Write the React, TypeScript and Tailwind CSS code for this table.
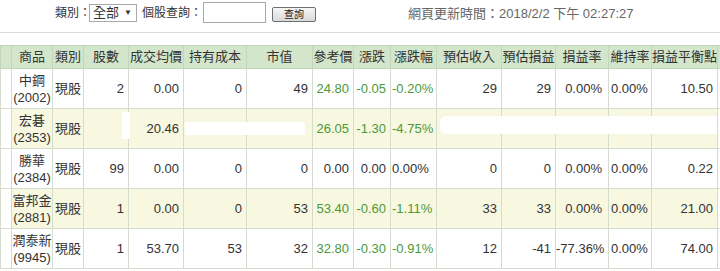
type Row = {
  name: string;
  code: string;
  kind: string;
  qty: string;
  avg: string;
  cost: string;
  value: string;
  ref: string;
  chg: string;
  pct: string;
  income: string;
  pnl: string;
  rate: string;
  keep: string;
  breakeven: string;
  green: boolean;
};

const rows: Row[] = [
  { name: "中鋼", code: "(2002)", kind: "現股", qty: "2", avg: "0.00", cost: "0", value: "49", ref: "24.80", chg: "-0.05", pct: "-0.20%", income: "29", pnl: "29", rate: "0.00%", keep: "0.00%", breakeven: "10.50", green: true },
  { name: "宏碁", code: "(2353)", kind: "現股", qty: "", avg: "20.46", cost: "", value: "", ref: "26.05", chg: "-1.30", pct: "-4.75%", income: "", pnl: "", rate: "", keep: "", breakeven: "", green: true },
  { name: "勝華", code: "(2384)", kind: "現股", qty: "99", avg: "0.00", cost: "0", value: "0", ref: "0.00", chg: "0.00", pct: "0.00%", income: "0", pnl: "0", rate: "0.00%", keep: "0.00%", breakeven: "0.22", green: false },
  { name: "富邦金", code: "(2881)", kind: "現股", qty: "1", avg: "0.00", cost: "0", value: "53", ref: "53.40", chg: "-0.60", pct: "-1.11%", income: "33", pnl: "33", rate: "0.00%", keep: "0.00%", breakeven: "21.00", green: true },
  { name: "潤泰新", code: "(9945)", kind: "現股", qty: "1", avg: "53.70", cost: "53", value: "32", ref: "32.80", chg: "-0.30", pct: "-0.91%", income: "12", pnl: "-41", rate: "-77.36%", keep: "0.00%", breakeven: "74.00", green: true },
];

const headers = ["商品", "類別", "股數", "成交均價", "持有成本", "市值", "參考價", "漲跌", "漲跌幅", "預估收入", "預估損益", "損益率", "維持率", "損益平衡點"];
const widths = [11, 41, 31, 45, 55, 63, 66, 41, 37, 46, 65, 54, 53, 43, 66, 20];

export default function App() {
  const font = { fontFamily: '"Liberation Sans", "Noto Sans CJK TC", sans-serif' };

  return (
    <div className="w-[720px] h-[271px] bg-white overflow-hidden text-[13px] text-[#333]" style={font}>
      {/* Query bar */}
      <div className="h-[33px] border-b border-[#dcdcdc] flex items-start">
        <div className="h-[25px] flex items-center pl-[55px] w-full">
          <span className="text-[12px]">類別：</span>
          <div className="ml-[-2px] h-[18px] w-[48px] border border-[#a8a8a8] flex items-center px-[3px] gap-[5px]">
            <span>全部</span>
            <span className="text-[8px]">▼</span>
          </div>
          <span className="ml-[5px] text-[12px]">個股查詢：</span>
          <div className="ml-[1px] h-[21px] w-[63px] border border-[#a9a9a9] bg-white"></div>
          <button className="ml-[6px] mt-[4px] h-[15px] w-[44px] border border-[#6f6f6f] rounded-[2px] bg-gradient-to-b from-[#f6f6f6] to-[#d9d9d9] text-[10px] leading-none text-[#222]">
            查詢
          </button>
          <span className="ml-[92px] mt-[3px] text-[#666]">網頁更新時間：2018/2/2 下午 02:27:27</span>
        </div>
      </div>

      {/* Holdings table */}
      <div className="relative mt-[12px] w-[720px] overflow-hidden">
        <table className="table-fixed border-collapse w-[737px]">
          <colgroup>
            {widths.map((w, i) => (
              <col key={i} style={{ width: w }} />
            ))}
          </colgroup>
          <thead>
            <tr className="h-[23px] bg-[#d3e6cc]">
              <th className="border border-[#c3d6bc]"></th>
              {headers.map((h) => (
                <th key={h} className="border border-[#c3d6bc] font-normal text-center p-0 whitespace-nowrap leading-[22px]">
                  {h}
                </th>
              ))}
              <th className="border border-[#c3d6bc]"></th>
            </tr>
          </thead>
          <tbody>
            {rows.map((r, i) => {
              const bg = i % 2 === 1 ? "bg-[#f8f7e0]" : "bg-white";
              const cell = `border border-[#d3dccd] ${bg} text-right pr-[4px] whitespace-nowrap`;
              const gcell = `${cell} ${r.green ? "text-[#4a9a3a]" : ""}`;
              return (
                <tr key={r.code} className="h-[40px]">
                  <td className="border border-[#d3dccd] bg-white"></td>
                  <td className={`border border-[#d3dccd] ${bg} text-center leading-[17px] p-0`}>
                    <div>{r.name}</div>
                    <div>{r.code}</div>
                  </td>
                  <td className={`border border-[#d3dccd] ${bg} text-left pl-[2px] whitespace-nowrap`}>{r.kind}</td>
                  <td className={cell}>{r.qty}</td>
                  <td className={cell}>{r.avg}</td>
                  <td className={cell}>{r.cost}</td>
                  <td className={cell}>{r.value}</td>
                  <td className={gcell}>{r.ref}</td>
                  <td className={`${gcell} pr-[1px]`}>{r.chg}</td>
                  <td className={`${gcell.replace("text-right", "text-left")} pl-[1px]`}>{r.pct}</td>
                  <td className={cell}>{r.income}</td>
                  <td className={cell}>{r.pnl}</td>
                  <td className={`${cell} pr-[6px]`}>{r.rate}</td>
                  <td className={`border border-[#d3dccd] ${bg} text-left pl-[2px] whitespace-nowrap`}>{r.keep}</td>
                  <td className={cell}>{r.breakeven}</td>
                  <td className="border border-[#d3dccd] bg-white"></td>
                </tr>
              );
            })}
          </tbody>
        </table>

        {/* redaction patches over the 宏碁 row */}
        <div className="absolute left-[122px] top-[67px] w-[8px] h-[27px] bg-white"></div>
        <div className="absolute left-[185px] top-[77px] w-[120px] h-[13px] bg-white rounded-[2px]"></div>
        <div className="absolute left-[440px] top-[71px] w-[277px] h-[18px] bg-white rounded-l-[6px]"></div>
      </div>
    </div>
  );
}
